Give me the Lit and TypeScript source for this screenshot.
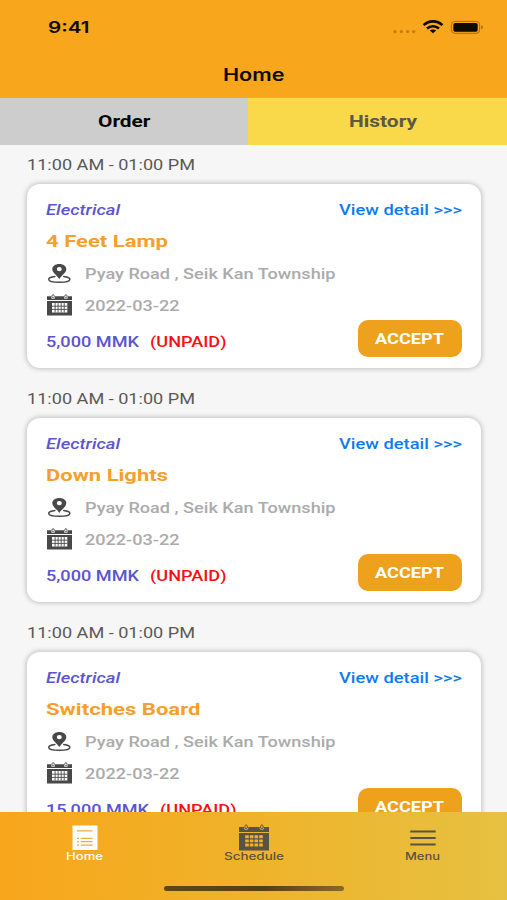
import { LitElement, html, svg, css } from "lit";
import { customElement, property, state } from "lit/decorators.js";

/** One line of text stretched to a given width, sitting on a given baseline. */
@customElement("wide-text")
class WideText extends LitElement {
  @property() text = "";
  @property({ type: Number }) width = 100;
  @property({ type: Number }) height = 24;
  @property({ type: Number }) base = 17;

  static styles = css`
    :host { display: block; flex: none; }
    svg { display: block; overflow: visible; }
    text { fill: currentColor; }
  `;

  render() {
    return html`<svg width=${this.width} height=${this.height}>
      <text x="0" y=${this.base} textLength=${this.width} lengthAdjust="spacingAndGlyphs">${this.text}</text>
    </svg>`;
  }
}

const calendar = svg`
  <path fill="currentColor" fill-rule="evenodd" d="M0 1.8H4.2V3A1.9 1.6 0 0 0 8 3V1.8H17V3A1.9 1.6 0 0 0 20.8 3V1.8H25V5.6H0Z
    M0 6.5H25V21H0Z M5 8.6V18H20.3V8.6Z"/>
  <path fill="none" stroke="currentColor" stroke-width=".9" d="M8.1 8.6V18M11.1 8.6V18M14.2 8.6V18M17.2 8.6V18M5 11.7H20.3M5 14.9H20.3"/>
  <ellipse cx="6.1" cy="1.9" rx="1.2" ry="1.7" fill="none" stroke="currentColor" stroke-width=".9"/>
  <ellipse cx="18.9" cy="1.9" rx="1.2" ry="1.7" fill="none" stroke="currentColor" stroke-width=".9"/>`;

const navCalendar = svg`
  <path fill="currentColor" fill-rule="evenodd" d="M0 2.5H4.9V3.7A2.2 1.8 0 0 0 9.3 3.7V2.5H20.7V3.7A2.2 1.8 0 0 0 25.1 3.7V2.5H30V7.4H0Z
    M0 8.5H30V26H0Z M6.2 10.8V13.7H9.8V10.8Z M10.8 10.8V13.7H14.4V10.8Z M15.5 10.8V13.7H19.1V10.8Z M20.2 10.8V13.7H23.8V10.8Z
    M6.2 14.9V17.8H9.8V14.9Z M10.8 14.9V17.8H14.4V14.9Z M15.5 14.9V17.8H19.1V14.9Z M20.2 14.9V17.8H23.8V14.9Z
    M6.2 19V21.9H9.8V19Z M10.8 19V21.9H14.4V19Z M15.5 19V21.9H19.1V19Z M20.2 19V21.9H23.8V19Z"/>
  <ellipse cx="7.1" cy="2.4" rx="1.3" ry="2" fill="none" stroke="currentColor" stroke-width="1"/>
  <ellipse cx="22.9" cy="2.4" rx="1.3" ry="2" fill="none" stroke="currentColor" stroke-width="1"/>`;

interface Order { title: string; titleWidth: number; price: string; priceWidth: number; }

@customElement("order-card")
class OrderCard extends LitElement {
  @property({ attribute: false }) order!: Order;

  static styles = css`
    :host { display: block; font: 500 15.1px Roboto, sans-serif; }
    .time { color: #585858; font-weight: 400; font-size: 15.5px; }
    .card { box-sizing: border-box; height: 184px; padding: 14px 19px 0 19px; border-radius: 13px;
      background: #fff; box-shadow: 0 0 5px 1px rgba(0,0,0,.22); }
    .row { display: flex; justify-content: space-between; }
    .kind { color: #5d55cf; font-style: italic; }
    .link { color: #0d7cf0; }
    .title { color: #f6a02b; font-weight: 700; font-size: 17.2px; }
    .info { display: flex; color: #ababab; gap: 13px; padding-left: .5px; }
    .info svg { color: #484848; flex: none; }
    .price { color: #5b53d0; }
    .unpaid { color: #f90f16; margin-left: 11px; }
    .amount { display: flex; }
    .accept { box-sizing: border-box; width: 104px; height: 37px; padding: 0 0 0 17px; border: 0; border-radius: 10px;
      background: #eea11d; color: #fff; font: 700 15.1px Roboto, sans-serif; }
  `;

  render() {
    const o = this.order;
    return html`
      <wide-text class="time" text="11:00 AM - 01:00 PM" width="168" height="39" base="24.5"></wide-text>
      <div class="card">
        <div class="row">
          <wide-text class="kind" text="Electrical" width="74" base="17.4"></wide-text>
          <wide-text class="link" text="View detail >>>" width="123" base="17.4"></wide-text>
        </div>
        <wide-text class="title" .text=${o.title} .width=${o.titleWidth} height="35" base="25"></wide-text>
        <div class="info">
          <svg width="25" height="32" viewBox="0 0 25 32">
            <path fill="currentColor" fill-rule="evenodd" d="M12.3 7C8.3 7 5.3 9.2 5.3 12.2C5.3 15.7 10.1 18.4 12.3 21.9C14.5 18.4 19.3 15.7 19.3 12.2C19.3 9.2 16.3 7 12.3 7Z M12.3 10.1A2.5 2.1 0 1 1 12.3 14.3A2.5 2.1 0 1 1 12.3 10.1Z"/>
            <path fill="none" stroke="currentColor" stroke-width="1.5" stroke-linecap="round" d="M7.9 19.4C4.2 19.9 1.7 20.9 1.7 22.2C1.7 24 6.1 25.3 12.3 25.3S22.9 24 22.9 22.2C22.9 20.9 20.4 19.9 16.7 19.4"/>
          </svg>
          <wide-text text="Pyay Road , Seik Kan Township" width="250.5" height="32" base="22"></wide-text>
        </div>
        <div class="info">
          <svg width="25" height="31.5" viewBox="0 -5.5 25 31.5">${calendar}</svg>
          <wide-text text="2022-03-22" width="94.5" height="31.5" base="22"></wide-text>
        </div>
        <div class="row">
          <div class="amount">
            <wide-text class="price" .text=${o.price} .width=${o.priceWidth} height="33" base="26.7"></wide-text>
            <wide-text class="unpaid" text="(UNPAID)" width="76.5" height="33" base="26.7"></wide-text>
          </div>
          <button class="accept"><wide-text text="ACCEPT" width="69" height="37" base="23.5"></wide-text></button>
        </div>
      </div>`;
  }
}

@customElement("app-root")
class AppRoot extends LitElement {
  @state() private orders: Order[] = [
    { title: "4 Feet Lamp", titleWidth: 122, price: "5,000 MMK", priceWidth: 93 },
    { title: "Down Lights", titleWidth: 122, price: "5,000 MMK", priceWidth: 93 },
    { title: "Switches Board", titleWidth: 154.5, price: "15,000 MMK", priceWidth: 103 },
  ];

  static styles = css`
    :host { display: flex; flex-direction: column; width: 507px; height: 900px; overflow: hidden; background: #f6f6f6;
      font-family: Inter, sans-serif; color: #0d0a04; }
    .status { display: flex; justify-content: space-between; height: 50px; padding: 0 23px 0 48px; background: #f8a61b;
      font-weight: 600; font-size: 16.2px; flex: none; }
    .header { display: flex; justify-content: center; height: 48px; background: #f8a61b; font-weight: 600; font-size: 17px; flex: none; padding-left: 1px; }
    .tabs { display: grid; grid-template-columns: 247.5px 1fr; height: 46.5px; font: 700 17px Roboto, sans-serif; flex: none; }
    .tab { display: flex; justify-content: center; background: #cdcdcd; color: #050505; }
    .tab.alt { background: #f9d84a; color: #5b5a43; padding-left: 12px; }
    .list { flex: 1; min-height: 0; overflow: hidden; display: flex; flex-direction: column; gap: 11px; padding: 0 26px 0 27px; }
    order-card { flex: none; }
    .nav { box-sizing: border-box; flex: none; height: 88.5px; background: linear-gradient(90deg, #f8a61b, #efb32a 50%, #e6c141); }
    .items { display: grid; grid-template-columns: repeat(3, 1fr); font: 500 11px Inter, sans-serif; color: #595347; }
    .item { display: flex; flex-direction: column; align-items: center; padding-top: 12.5px; }
    .item svg { display: block; }
    .item.on { color: #fff; }
    .item wide-text { margin-top: -1px; }
    .bar { width: 180px; height: 5.5px; margin: 26px auto 0 164px; border-radius: 3px;
      background: linear-gradient(90deg, #5f4712, #54400f 55%, #866c22); }
  `;

  render() {
    return html`
      <div class="status">
        <wide-text text="9:41" width="41.5" height="50" base="33"></wide-text>
        <svg width="92" height="50" viewBox="392 0 92 50">
          <g fill="#bd7d18"><circle cx="395" cy="31.6" r="1.6"/><circle cx="401.3" cy="31.6" r="1.6"/><circle cx="407.6" cy="31.6" r="1.6"/><circle cx="413.7" cy="31.6" r="1.6"/></g>
          <g fill="none" stroke="#0d0a04" stroke-width="2.6">
            <path d="M423.6 25.1C429 20.1 437 20.1 442.4 25.1"/>
            <path d="M427 28.5C430.5 25.4 435.5 25.4 439 28.5"/>
          </g>
          <path fill="#0d0a04" d="M429.8 30.6C431.6 29.1 434.4 29.1 436.2 30.6L433 33.3Z"/>
          <rect x="451.4" y="21.4" width="28.2" height="11.9" rx="3.3" fill="none" stroke="#a66f15" stroke-width="1"/>
          <rect x="453.3" y="23" width="24.4" height="8.7" rx="1.8" fill="#0d0a04"/>
          <path fill="#a66f15" d="M481.2 25.3C483.5 25.9 483.5 28.8 481.2 29.4Z"/>
        </svg>
      </div>
      <div class="header"><wide-text text="Home" width="61.5" height="48" base="30.5"></wide-text></div>
      <div class="tabs">
        <div class="tab"><wide-text text="Order" width="52.5" height="46" base="29.3"></wide-text></div>
        <div class="tab alt"><wide-text text="History" width="68" height="46" base="29.3"></wide-text></div>
      </div>
      <div class="list">${this.orders.map((o) => html`<order-card .order=${o}></order-card>`)}</div>
      <div class="nav">
        <div class="items">
          <div class="item on">
            <svg width="26" height="28" viewBox="0 0 26 28">
              <path fill="currentColor" d="M.5 1.5H25.5V26H.5Z"/>
              <g fill="none" stroke="#e9ae3c" stroke-width="1.2"><path d="M5 6.9H20.6M8.7 14.3H20.6M8.7 17.7H20.6M8.7 21.1H20.6M5 14.3H7M5 17.7H7M5 21.1H7"/></g>
            </svg>
            <wide-text text="Home" width="37" height="8.5" base="9"></wide-text>
          </div>
          <div class="item">
            <svg width="30" height="28" viewBox="0 -.5 30 28">${navCalendar}</svg>
            <wide-text text="Schedule" width="60" height="8.5" base="9"></wide-text>
          </div>
          <div class="item">
            <svg width="26" height="28" viewBox="0 0 26 28"><path fill="none" stroke="currentColor" stroke-width="2.2" d="M.3 7.5H25.7M.3 14H25.7M.3 20.5H25.7"/></svg>
            <wide-text text="Menu" width="35" height="8.5" base="9"></wide-text>
          </div>
        </div>
        <div class="bar"></div>
      </div>`;
  }
}
